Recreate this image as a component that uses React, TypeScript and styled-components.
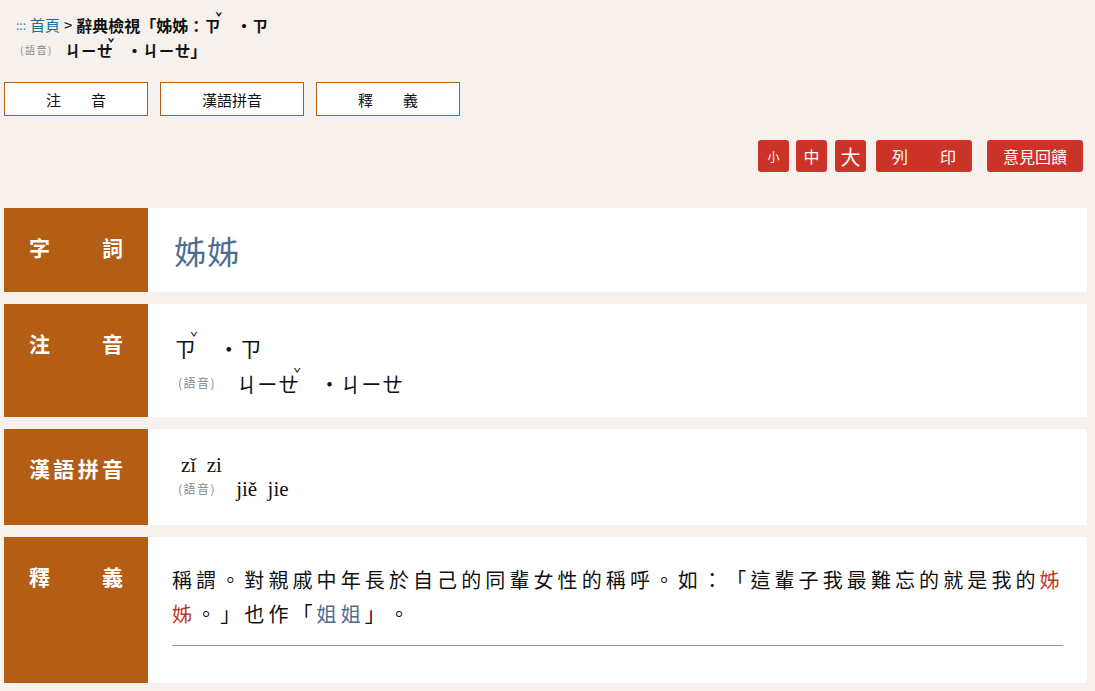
import styled, { createGlobalStyle } from 'styled-components';

const GlobalStyle = createGlobalStyle`
  html, body {
    margin: 0;
    padding: 0;
    background: #f6f1ed;
    font-family: "Noto Sans CJK TC", "Noto Sans", sans-serif;
    color: #111;
    text-spacing-trim: space-all;
  }
`;

const Page = styled.div`
  padding: 0 8px 8px 4px;
`;

const Breadcrumb = styled.div`
  padding: 14px 0 0 12px;
  font-size: 15px;
  line-height: 22px;
`;

const Crumbs = styled.div`
  display: flex;
  align-items: center;
  gap: 4px;
  height: 22px;
`;

const Dots = styled.span`
  color: #2a8cb5;
  font-size: 12px;
`;

const HomeLink = styled.a`
  color: #1f6f9e;
  font-size: 15px;
  text-decoration: none;
`;

const Strong = styled.span`
  font-weight: 700;
  font-size: 16px;
  display: inline-flex;
  align-items: center;
`;

const HeaderAlt = styled.div`
  display: flex;
  align-items: center;
  height: 28px;
  padding-left: 4px;
  font-weight: 700;
  font-size: 16px;
`;

const AltTag = styled.span<{ $size?: number; $mr?: number }>`
  color: #888;
  font-size: ${({ $size }) => $size ?? 12}px;
  letter-spacing: 1.5px;
  font-weight: 400;
  margin-right: ${({ $mr }) => $mr ?? 20}px;
`;

const Tone = styled.span<{ $size?: number; $dy?: number; $dx?: number }>`
  display: inline-block;
  font-size: ${({ $size }) => $size ?? 13}px;
  line-height: 1;
  vertical-align: top;
  margin-left: ${({ $dx }) => $dx ?? -6}px;
  transform: translateY(${({ $dy }) => $dy ?? 1}px);
`;

const Syllable = styled.span<{ $gap?: number }>`
  display: inline-block;
  margin-right: ${({ $gap }) => $gap ?? 12}px;
`;

const Tabs = styled.div`
  display: flex;
  gap: 12px;
  margin-top: 18px;
`;

const Tab = styled.button`
  width: 144px;
  height: 34px;
  background: #fff;
  border: 1px solid #b35d15;
  font-family: inherit;
  font-size: 15px;
  color: #111;
  padding: 0;
  cursor: pointer;
`;

const Tools = styled.div`
  display: flex;
  justify-content: flex-end;
  align-items: center;
  margin-top: 24px;
  padding-right: 4px;
`;

const RedButton = styled.button<{ $w: number; $size: number; $mr: number }>`
  width: ${({ $w }) => $w}px;
  height: 32px;
  margin-right: ${({ $mr }) => $mr}px;
  background: #cb3328;
  color: #fff;
  border: none;
  border-radius: 3px;
  font-family: inherit;
  font-size: ${({ $size }) => $size}px;
  padding: 0;
  cursor: pointer;
`;

const Rows = styled.div`
  display: flex;
  flex-direction: column;
  gap: 12px;
  margin-top: 36px;
`;

const Row = styled.div`
  display: flex;
  background: #fff;
`;

const Label = styled.div`
  width: 144px;
  flex-shrink: 0;
  box-sizing: border-box;
  background: #b35d15;
  color: #fff;
  font-weight: 700;
  font-size: 21px;
  line-height: 26px;
  padding: 26px 25px 0;
  text-align: justify;
  text-align-last: justify;
`;

const Content = styled.div<{ $pad: string }>`
  flex: 1;
  padding: ${({ $pad }) => $pad};
`;

const Word = styled.div`
  font-size: 32px;
  line-height: 40px;
  color: #4f6d8f;
  letter-spacing: 1px;
`;

const ZhuyinLine = styled.div<{ $size: number; $indent?: number }>`
  display: flex;
  align-items: center;
  font-size: ${({ $size }) => $size}px;
  line-height: 36px;
  padding-left: ${({ $indent }) => $indent ?? 0}px;
`;

const PinyinLine = styled.div<{ $indent?: number }>`
  display: flex;
  align-items: center;
  font-family: "Liberation Serif", serif;
  font-size: 21px;
  line-height: 24px;
  padding-left: ${({ $indent }) => $indent ?? 0}px;
`;

const PinyinTag = styled.span`
  color: #888;
  font-family: "Noto Sans CJK TC", sans-serif;
  font-size: 12px;
  letter-spacing: 1.5px;
  margin-right: 20px;
`;

const Definition = styled.p`
  margin: 0;
  font-size: 20px;
  line-height: 34px;
  letter-spacing: 4.1px;
  color: #111;
`;

const Red = styled.span`
  color: #c0392b;
`;

const Blue = styled.span`
  color: #4f6d8f;
`;

const Rule = styled.hr`
  margin: 14px 4px 0 0;
  border: none;
  border-top: 1px solid #999;
`;

export default function App() {
  return (
    <>
      <GlobalStyle />
      <Page>
        <Breadcrumb>
          <Crumbs>
            <Dots>:::</Dots>
            <HomeLink href="#">首頁</HomeLink>
            <span>&gt;</span>
            <Strong>
              辭典檢視「姊姊：
              <Syllable $gap={14}>
                ㄗ<Tone $size={11} $dy={-2} $dx={-5}>ˇ</Tone>
              </Syllable>
              ・ㄗ
            </Strong>
          </Crumbs>
          <HeaderAlt>
            <AltTag $size={10} $mr={12}>(語音)</AltTag>
            <Syllable $gap={12}>
              ㄐㄧㄝ<Tone $size={11} $dy={-1} $dx={-5}>ˇ</Tone>
            </Syllable>
            ・ㄐㄧㄝ」
          </HeaderAlt>
        </Breadcrumb>

        <Tabs>
          <Tab>注　　音</Tab>
          <Tab>漢語拼音</Tab>
          <Tab>釋　　義</Tab>
        </Tabs>

        <Tools>
          <RedButton $w={31} $size={12} $mr={7}>小</RedButton>
          <RedButton $w={31} $size={16} $mr={8}>中</RedButton>
          <RedButton $w={31} $size={20} $mr={10}>大</RedButton>
          <RedButton $w={96} $size={16} $mr={15}>列　　印</RedButton>
          <RedButton $w={96} $size={16} $mr={0}>意見回饋</RedButton>
        </Tools>

        <Rows>
          <Row>
            <Label>字詞</Label>
            <Content $pad="22px 26px">
              <Word>姊姊</Word>
            </Content>
          </Row>

          <Row>
            <Label>注音</Label>
            <Content $pad="25px 26px 16px">
              <ZhuyinLine $size={22}>
                <Syllable $gap={20}>
                  ㄗ<Tone>ˇ</Tone>
                </Syllable>
                ・ㄗ
              </ZhuyinLine>
              <ZhuyinLine $size={21} $indent={4}>
                <AltTag>(語音)</AltTag>
                <Syllable $gap={18}>
                  ㄐㄧㄝ<Tone>ˇ</Tone>
                </Syllable>
                ・ㄐㄧㄝ
              </ZhuyinLine>
            </Content>
          </Row>

          <Row>
            <Label>漢語拼音</Label>
            <Content $pad="24px 26px">
              <PinyinLine $indent={7}>zǐ&nbsp;&nbsp;zi</PinyinLine>
              <PinyinLine $indent={4}>
                <PinyinTag>(語音)</PinyinTag>
                jiě&nbsp;&nbsp;jie
              </PinyinLine>
            </Content>
          </Row>

          <Row>
            <Label>釋義</Label>
            <Content $pad="26px 20px 37px 24px">
              <Definition>
                稱謂。對親戚中年長於自己的同輩女性的稱呼。如：「這輩子我最難忘的就是我的<Red>姊姊</Red>。」也作「<Blue>姐姐</Blue>」。
              </Definition>
              <Rule />
            </Content>
          </Row>
        </Rows>
      </Page>
    </>
  );
}
